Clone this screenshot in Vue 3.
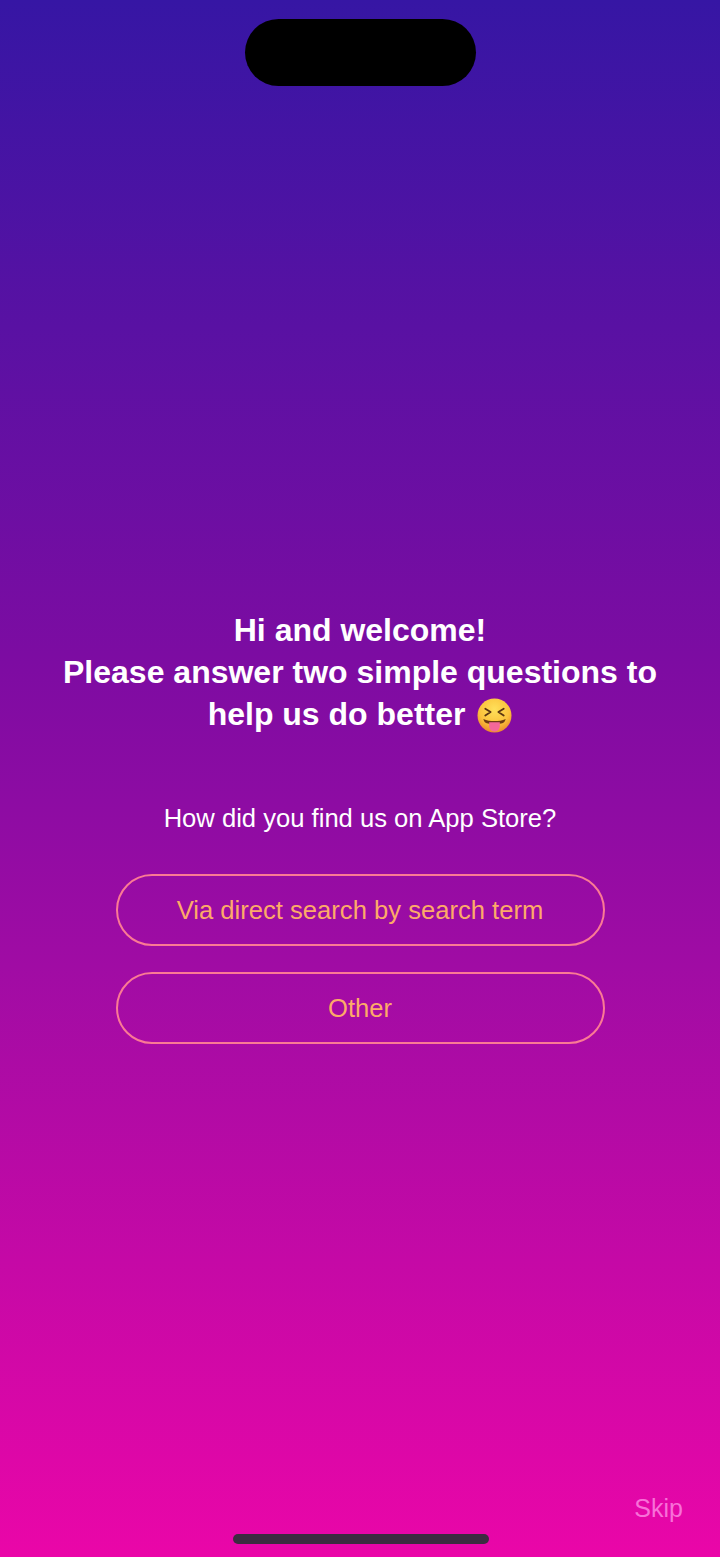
<template>
  <div class="screen">
    <div class="notch-row"><div class="notch"></div></div>

    <main class="survey">
      <h1 class="title">
        Hi and welcome!<br />
        Please answer two simple questions to<br />
        help us do better
        <svg class="emoji" viewBox="0 0 36 36" aria-hidden="true">
          <defs>
            <radialGradient id="face" cx="50%" cy="32%" r="68%">
              <stop offset="0" stop-color="#ffe05a" />
              <stop offset="0.65" stop-color="#fbc23c" />
              <stop offset="1" stop-color="#ec8a2c" />
            </radialGradient>
          </defs>
          <circle cx="18" cy="18" r="17.500" fill="url(#face)" />
          <path d="M8.500 11l5.500 3.500-5.500 3.500M27.500 11L22 14.500l5.500 3.500" fill="none" stroke="#5a3412" stroke-width="1.800" stroke-linecap="round" stroke-linejoin="round" />
          <path d="M6.500 21.500c7 3 16 3 23 0-.5 2.400-2 4-3.500 4.500-5 1.300-11 1.300-16 0-1.500-.5-3-2.100-3.500-4.500z" fill="#6d3a14" />
          <path d="M12.500 25h11v4a5.500 5.500 0 0 1-11 0z" fill="#f4679a" />
        </svg>
      </h1>

      <p class="question">How did you find us on App Store?</p>

      <div class="answers">
        <button v-for="a in answers" :key="a" class="answer" type="button">{{ a }}</button>
      </div>
    </main>

    <footer class="bottom">
      <div class="skip-row"><span class="skip">Skip</span></div>
      <div class="home-bar"></div>
    </footer>
  </div>
</template>

<script setup>
const answers = ['Via direct search by search term', 'Other']
</script>

<style>
html, body { margin: 0; padding: 0; }
</style>

<style scoped>
.screen {
  width: 720px;
  height: 1557px;
  display: flex;
  flex-direction: column;
  overflow: hidden;
  font-family: "Liberation Sans", Arial, sans-serif;
  background: linear-gradient(180deg, #3616a4 0%, #7c0ca2 42%, #a00ca4 62%, #ea06a8 100%);
}

.notch-row { display: flex; justify-content: center; padding-top: 19px; }
.notch { width: 231px; height: 67px; background: #000; border-radius: 34px; }

.survey {
  flex: 1;
  display: flex;
  flex-direction: column;
  align-items: center;
  padding-top: 523px;
}

.title {
  margin: 0;
  font-size: 32px;
  line-height: 42px;
  font-weight: 700;
  color: #fff;
  text-align: center;
  white-space: nowrap;
}
.emoji { width: 35px; height: 35px; vertical-align: -8px; margin-left: 3px; }

.question {
  margin: 67px 0 0;
  font-size: 25.600px;
  line-height: 32px;
  color: #fff;
}

.answers {
  display: flex;
  flex-direction: column;
  gap: 26px;
  margin-top: 40px;
}
.answer {
  width: 489px;
  height: 72px;
  background: transparent;
  border: 2px solid #fb7a94;
  border-radius: 36px;
  color: #fdaa68;
  font-family: inherit;
  font-size: 25.600px;
  padding: 0;
}

.bottom { display: flex; flex-direction: column; padding-bottom: 13px; }
.skip-row { display: flex; justify-content: flex-end; padding-right: 37px; }
.skip { font-size: 25px; line-height: 32px; color: #f870d8; }
.home-bar {
  width: 256px;
  height: 10px;
  margin: 10px auto 0 233px;
  background: #3c2c40;
  border-radius: 5px;
}
</style>
